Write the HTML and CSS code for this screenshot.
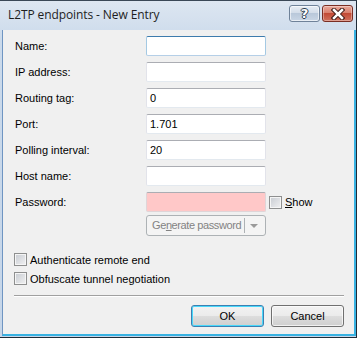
FILE: index.html
```html
<!DOCTYPE html>
<html lang="en">
<head>
    <meta charset="UTF-8">
    <title>L2TP endpoints - New Entry</title>
    <link rel="stylesheet" href="styles.css">
</head>
<body>
    <div class="window">
        <div class="titlebar">
            <span class="title">L2TP endpoints - New Entry</span>
            <div class="caption-buttons">
                <div class="cap help">?</div>
                <div class="cap close">
                    <svg width="14" height="12" viewBox="0 0 14 12">
                        <path d="M3 2 L11 10 M11 2 L3 10" stroke="#3b1a16" stroke-width="4.5" stroke-linecap="square"/>
                        <path d="M3 2 L11 10 M11 2 L3 10" stroke="#fff" stroke-width="2.5" stroke-linecap="square"/>
                    </svg>
                </div>
            </div>
        </div>

        <div class="client">
            <div class="form">
                <label class="label">Name:</label>
                <div class="field focused"></div>
                <span></span>

                <label class="label">IP address:</label>
                <div class="field"></div>
                <span></span>

                <label class="label">Routing tag:</label>
                <div class="field">0</div>
                <span></span>

                <label class="label">Port:</label>
                <div class="field">1.701</div>
                <span></span>

                <label class="label">Polling interval:</label>
                <div class="field">20</div>
                <span></span>

                <label class="label">Host name:</label>
                <div class="field"></div>
                <span></span>

                <label class="label">Password:</label>
                <div class="field password"></div>
                <div class="check show-check"><span class="box"></span><span><u>S</u>how</span></div>

                <span></span>
                <div class="split-button">
                    <span class="split-text">Ge<u>n</u>erate password</span>
                    <span class="split-arrow"></span>
                </div>
                <span></span>
            </div>

            <div class="checks">
                <div class="check"><span class="box"></span><span>Authenticate remote end</span></div>
                <div class="check"><span class="box"></span><span>Obfuscate tunnel negotiation</span></div>
            </div>

            <div class="separator"></div>

            <div class="buttons">
                <div class="button default">OK</div>
                <div class="button">Cancel</div>
            </div>
        </div>
    </div>
</body>
</html>
```

FILE: styles.css
```css
body {
    margin: 0;
    background: #ffffff;
    font-family: "Liberation Sans", Arial, sans-serif;
    font-size: 11px;
    color: #000;
}

.window {
    width: 357px;
    height: 338px;
    box-sizing: border-box;
    background: linear-gradient(#dde6f1, #cbdaeb 40px, #c6d6e9);
    border-top: 1px solid #3a4756;
    border-right: 1px solid #1f2b38;
    border-bottom: 1px solid #1f2b38;
}

.titlebar {
    height: 29px;
    display: flex;
    align-items: flex-start;
    justify-content: space-between;
}

.title {
    font-family: "Open Sans", "Noto Sans", sans-serif;
    font-size: 12px;
    color: #1e1e1e;
    margin: 5px 0 0 8px;
    letter-spacing: -0.1px;
}

.caption-buttons {
    display: flex;
    gap: 2px;
    margin: 4px 3px 0 0;
}

.cap {
    height: 17px;
    border-radius: 3px;
    display: flex;
    align-items: center;
    justify-content: center;
    box-sizing: border-box;
}

.help {
    width: 31px;
    border: 1px solid #6f8299;
    background: linear-gradient(#e8eef5, #d3dde9 45%, #b9c8da 50%, #c9d6e5);
    box-shadow: inset 0 0 0 1px rgba(255, 255, 255, 0.6);
    font-family: "DejaVu Sans", sans-serif;
    font-weight: bold;
    font-size: 13px;
    color: #fff;
    text-shadow: 1px 0 0 #2d3c4e, -1px 0 0 #2d3c4e, 0 1px 0 #2d3c4e, 0 -1px 0 #2d3c4e;
}

.close {
    width: 31px;
    border: 1px solid #7a2e24;
    background: linear-gradient(#eaa99c, #d9806e 45%, #c24a35 50%, #d0705c);
    box-shadow: inset 0 0 0 1px rgba(255, 255, 255, 0.35);
}

.client {
    margin-left: 2px;
    width: 354px;
    height: 306px;
    box-sizing: border-box;
    background: #f0f0f0;
    border-left: 1px solid #6f95c2;
    border-right: 2px solid #38b2e2;
    border-bottom: 2px solid #38b2e2;
    padding-top: 6px;
}

.form {
    display: grid;
    grid-template-columns: 131px 120px auto;
    grid-auto-rows: 20px;
    row-gap: 6px;
    padding-left: 12px;
}

.label {
    line-height: 20px;
}

.field {
    box-sizing: border-box;
    height: 20px;
    background: #fff;
    border: 1px solid #e2e3ea;
    border-top-color: #abadb3;
    border-bottom-color: #e3e9ef;
    border-radius: 2px;
    padding-left: 3px;
    line-height: 18px;
}

.field.focused {
    border-color: #a4c9e3;
    border-top-color: #3d7bad;
    border-bottom-color: #b5cfe7;
}

.field.password {
    background: #ffc8c8;
    border-color: #dfd5d8;
    border-top-color: #abadb3;
}

.check {
    display: flex;
    align-items: center;
    gap: 3px;
    height: 19px;
}

.show-check {
    height: 20px;
    margin-left: 3px;
}

.box {
    width: 13px;
    height: 13px;
    box-sizing: border-box;
    border: 1px solid #8e8f8f;
    background: linear-gradient(135deg, #c7cbd1, #f1f1f2);
    box-shadow: inset 0 0 0 1px #f5f5f5;
}

.split-button {
    margin-top: -3px;
    height: 21px;
    box-sizing: border-box;
    border: 1px solid #adb2b5;
    border-radius: 3px;
    background: #f4f4f4;
    display: flex;
    align-items: center;
    color: #838383;
}

.split-text {
    flex: 0 0 98px;
    box-sizing: border-box;
    padding-left: 5px;
    white-space: nowrap;
    overflow: hidden;
    letter-spacing: -0.4px;
    border-right: 1px solid #adb2b5;
    line-height: 15px;
}

.split-arrow {
    margin-left: 5px;
    width: 0;
    height: 0;
    border-left: 4px solid transparent;
    border-right: 4px solid transparent;
    border-top: 4px solid #9a9a9a;
}

.checks {
    margin-top: 12px;
    padding-left: 11px;
}

.separator {
    margin: 7px 10px 0 11px;
    height: 1px;
    background: #a0a0a0;
    border-bottom: 1px solid #fff;
}

.buttons {
    display: flex;
    justify-content: flex-end;
    gap: 7px;
    margin: 8px 10px 0 0;
}

.button {
    width: 73px;
    height: 22px;
    box-sizing: border-box;
    border: 1px solid #707070;
    border-radius: 3px;
    background: linear-gradient(#f2f2f2, #ebebeb 50%, #dddddd 50%, #cfcfcf);
    box-shadow: inset 0 0 0 1px rgba(255, 255, 255, 0.7);
    display: flex;
    align-items: center;
    justify-content: center;
}

.button.default {
    border-color: #3c7fb1;
    box-shadow: inset 0 0 0 1px #48d8fb;
}
```
